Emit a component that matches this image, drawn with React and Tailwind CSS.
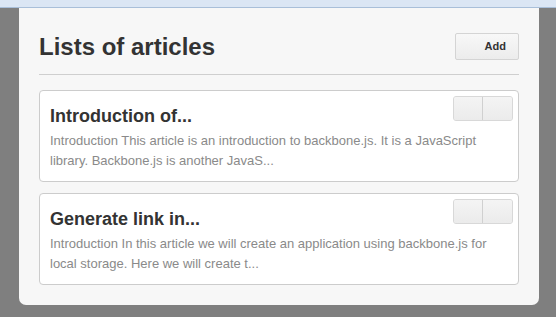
import React from "react";

const articles = [
  {
    id: 1,
    title: "Introduction of...",
    summary:
      "Introduction This article is an introduction to backbone.js. It is a JavaScript library. Backbone.js is another JavaS...",
  },
  {
    id: 2,
    title: "Generate link in...",
    summary:
      "Introduction In this article we will create an application using backbone.js for local storage. Here we will create t...",
  },
];

export default function App() {
  return (
    <div className="w-[556px] h-[317px] bg-[#7f7f7f] flex flex-col overflow-hidden font-['Liberation_Sans',Arial,sans-serif]">
      <div className="h-[8px] shrink-0 bg-[#dbe6f4] border-b border-[#a9bfd9]" />
      <div className="mx-[19px] w-[520px] h-[297px] bg-[#f7f7f7] rounded-b-[7px] px-[20px] pt-[25px]">
        <div className="flex items-center justify-between h-[27px]">
          <h1 className="text-[24px] font-bold text-[#333] leading-none">Lists of articles</h1>
          <button className="w-[64px] h-[27px] border border-[#d4d4d4] rounded-[2px] bg-gradient-to-b from-[#f8f8f8] to-[#ececec] text-[11px] font-bold text-[#333] text-right pr-[12px]">
            Add
          </button>
        </div>
        <div className="mt-[14px] border-t border-[#cfcfcf]" />
        <ul className="mt-[15px] flex flex-col gap-[11px]">
          {articles.map((a) => (
            <li
              key={a.id}
              className="h-[92px] bg-white border border-[#cccccc] rounded-[4px] pl-[10px] pr-[5px] pt-[5px]"
            >
              <div className="flex justify-end">
                <div className="flex h-[25px] border border-[#d8d8d8] rounded-[3px] bg-[#efefef] overflow-hidden">
                  <div className="w-[29px] border-r border-[#d0d0d0] bg-gradient-to-b from-[#f4f4f4] to-[#ebebeb]" />
                  <div className="w-[29px] bg-gradient-to-b from-[#f4f4f4] to-[#ebebeb]" />
                </div>
              </div>
              <h2 className="-mt-[16px] text-[18px] font-bold text-[#333] leading-[22px]">{a.title}</h2>
              <p className="mt-[4px] pr-[20px] text-[13px] leading-[20px] text-[#8a8a8a]">{a.summary}</p>
            </li>
          ))}
        </ul>
      </div>
    </div>
  );
}
